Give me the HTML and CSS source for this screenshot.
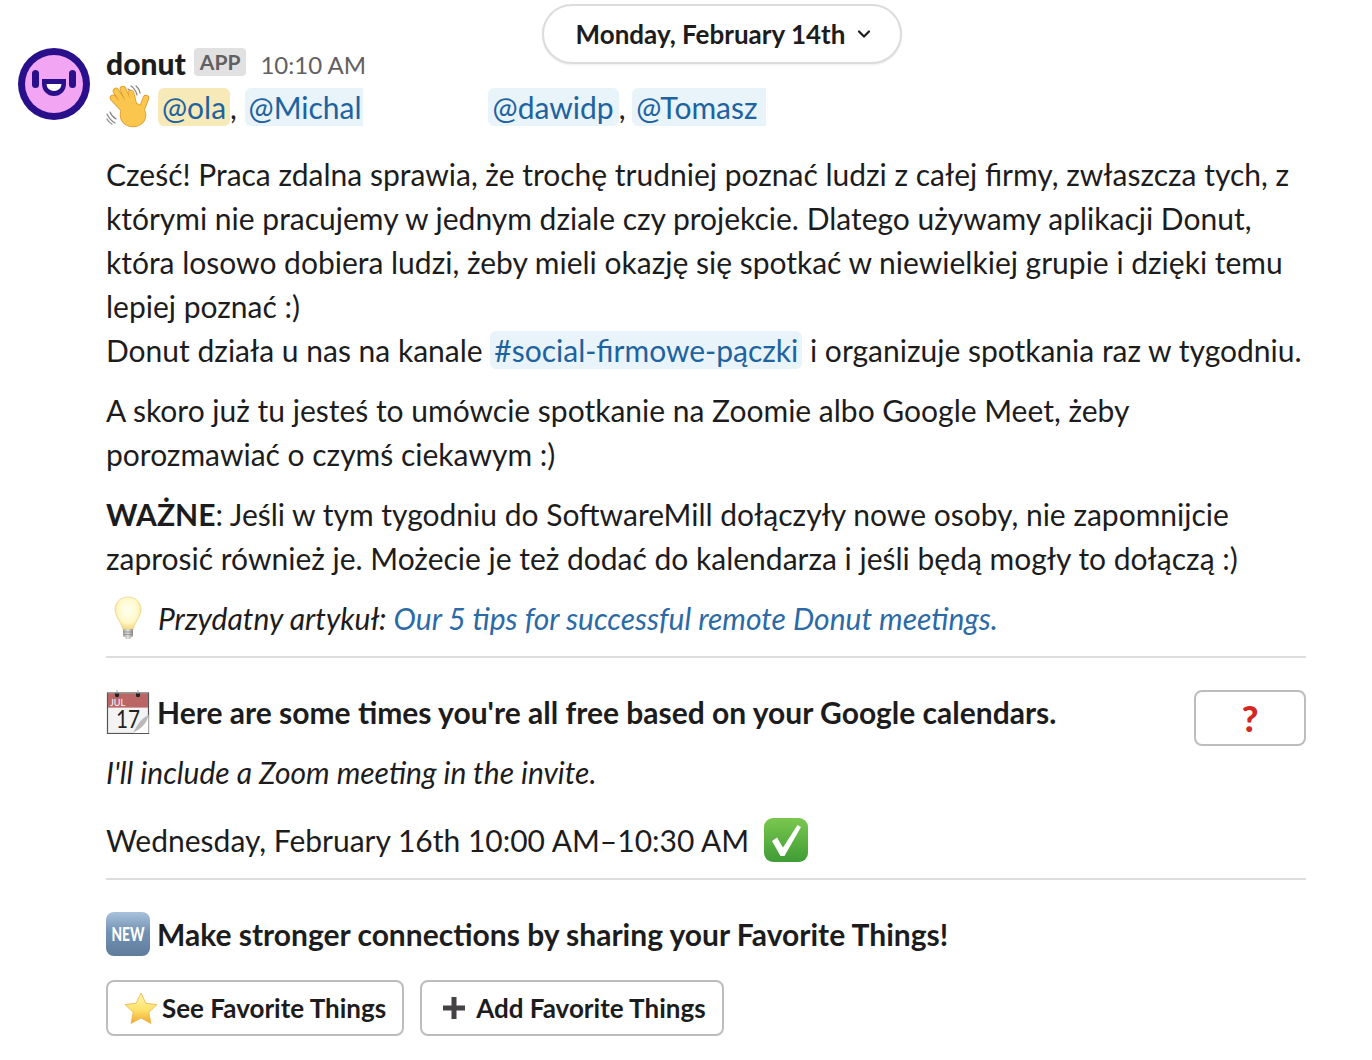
FILE: index.html
```html
<!DOCTYPE html>
<html lang="pl">
<head>
<meta charset="utf-8">
<title>donut</title>
<link rel="stylesheet" href="styles.css">
</head>
<body>
<button class="date-pill">Monday, February 14th
  <svg class="chev" viewBox="0 0 14 10" width="14" height="10"><path d="M2 2.500 7 7.500 12 2.500" fill="none" stroke="#1d1c1d" stroke-width="2.200" stroke-linecap="round" stroke-linejoin="round"/></svg>
</button>
<main class="message">
  <svg class="avatar" viewBox="0 0 72 72" width="72" height="72">
    <circle cx="36" cy="36" r="36" fill="#2a0f8a"/>
    <circle cx="36" cy="36" r="29" fill="#f1a5f3"/>
    <rect x="14" y="22" width="7" height="18" rx="3.500" fill="#2a0f8a"/>
    <rect x="51" y="22" width="7" height="18" rx="3.500" fill="#2a0f8a"/>
    <path d="M24 31H48V36A12 12 0 0 1 24 36Z" fill="#2a0f8a"/>
    <path d="M28.500 36H43.500A7.500 7 0 0 1 28.500 36Z" fill="#fff"/>
  </svg>
  <div class="body">
    <div class="head">
      <strong class="name">donut</strong>
      <span class="badge">APP</span>
      <span class="time">10:10 AM</span>
    </div>
    <p class="mentions">
      <svg class="emoji wave" viewBox="0 0 44 44" width="44" height="44">
        <path d="M25 1c3 2 5 5 6 9M22 4c2 1 4 4 5 7M30 1c2 2 4 4 4 7M1 29c2 4 4 7 8 9M4 27c1 3 3 5 6 7M1 34c1 2 3 4 5 5" fill="none" stroke="#858585" stroke-width="1.200" stroke-linecap="round"/>
        <g class="hand-shade">
          <path d="M21 28 7 13M22 25 10 6M25 23 17 4M29 24 25 8M33 31 40 13"/>
          <ellipse cx="27" cy="30" rx="10" ry="9"/>
        </g>
        <g class="hand-fill">
          <path d="M21 28 7 13M22 25 10 6M25 23 17 4M29 24 25 8M33 31 40 13"/>
          <ellipse cx="27" cy="30" rx="10" ry="9"/>
        </g>
      </svg><span class="mention self">@ola</span>, <span class="mention cut">@Michal</span><span class="redacted"></span><span class="mention wide">@dawidp</span>, <span class="mention tail">@Tomasz</span>
    </p>
    <div class="copy">
      <p>Cześć! Praca zdalna sprawia, że trochę trudniej poznać ludzi z całej firmy, zwłaszcza tych, z którymi nie pracujemy w jednym dziale czy projekcie. Dlatego używamy aplikacji Donut, która losowo dobiera ludzi, żeby mieli okazję się spotkać w niewielkiej grupie i dzięki temu lepiej poznać :)<br>Donut działa u nas na kanale <span class="channel">#social-firmowe-pączki</span> i organizuje spotkania raz w tygodniu.</p>
      <p>A skoro już tu jesteś to umówcie spotkanie na Zoomie albo Google Meet, żeby porozmawiać o czymś ciekawym :)</p>
      <p><strong>WAŻNE</strong>: Jeśli w tym tygodniu do SoftwareMill dołączyły nowe osoby, nie zapomnijcie zaprosić również je. Możecie je też dodać do kalendarza i jeśli będą mogły to dołączą :)</p>
      <p class="tip">
        <svg class="emoji" viewBox="0 0 44 44" width="44" height="44">
          <defs><radialGradient id="bulb" cx=".5" cy=".4" r=".6"><stop offset="0" stop-color="#fffff2"/><stop offset=".65" stop-color="#fff8c8"/><stop offset="1" stop-color="#f2d67f"/></radialGradient>
          <linearGradient id="base" x1="0" y1="0" x2="1" y2="0"><stop offset="0" stop-color="#a5a5a0"/><stop offset=".5" stop-color="#e2e2dc"/><stop offset="1" stop-color="#8a8a86"/></linearGradient></defs>
          <path d="M22 1C14.500 1 9 6.500 9 13.500c0 6.500 5.500 11.500 8 20h10c2.500-8.500 8-13.500 8-20C35 6.500 29.500 1 22 1Z" fill="url(#bulb)" stroke="#ecd48a" stroke-width=".8"/>
          <path d="M17 33h10v6.500c0 1-1 1.500-2 1.500l-1 2h-4l-1-2c-1 0-2-.5-2-1.500Z" fill="url(#base)"/>
          <path d="M17 36h10M17 38.500h10" stroke="#85857f" stroke-width=".7"/>
        </svg><em>Przydatny artykuł: <a href="#">Our 5 tips for successful remote Donut meetings.</a></em>
      </p>
    </div>
    <hr>
    <section class="times">
      <div class="times-text">
        <h2 class="title">
          <svg class="emoji" viewBox="0 0 44 44" width="44" height="44">
            <rect x="1.500" y="3" width="41" height="40.500" fill="#f3f3f3" stroke="#555" stroke-width="1.200"/>
            <rect x="2" y="3.600" width="40" height="14" fill="#bb6666"/>
            <circle cx="11" cy="5" r="2.200" fill="#222"/><circle cx="32" cy="5" r="2.200" fill="#222"/>
            <path d="M11 0v4M32 0v4" stroke="#9aa" stroke-width="1"/>
            <text class="cal-month" x="4" y="15.500">JUL</text>
            <text class="cal-day" x="10" y="38" textLength="24" lengthAdjust="spacingAndGlyphs">17</text>
            <path d="M42.500 25 27 43h15.500Z" fill="#fff"/>
            <path d="M42.500 25C41 33 36 38 27 43 32 35 33 30 42.500 25Z" fill="#b9b9b9"/>
          </svg>Here are some times you're all free based on your Google calendars.
        </h2>
        <p class="note"><em>I'll include a Zoom meeting in the invite.</em></p>
      </div>
      <button class="btn help">?</button>
    </section>
    <p class="slot">Wednesday, February 16th 10:00 AM–10:30 AM
      <svg class="check" viewBox="0 0 44 44" width="44" height="44">
        <defs><linearGradient id="green" x1="0" y1="0" x2="0" y2="1"><stop offset="0" stop-color="#7ac74f"/><stop offset="1" stop-color="#3f9c35"/></linearGradient></defs>
        <rect width="44" height="44" rx="9" fill="url(#green)"/>
        <path d="M8 23l5-3.500 6 10L33.500 7 37 9 20.500 38h-4Z" fill="#fff"/>
      </svg>
    </p>
    <hr class="second">
    <h2 class="title new-title">
      <svg class="emoji" viewBox="0 0 44 44" width="44" height="44">
        <defs><linearGradient id="blue" x1="0" y1="0" x2="0" y2="1"><stop offset="0" stop-color="#a9c2dc"/><stop offset=".45" stop-color="#7392b3"/><stop offset="1" stop-color="#5f7c9c"/></linearGradient></defs>
        <rect width="44" height="44" rx="8" fill="url(#blue)"/>
        <text class="new-label" x="5.500" y="28.500" textLength="33" lengthAdjust="spacingAndGlyphs">NEW</text>
      </svg>Make stronger connections by sharing your Favorite Things!
    </h2>
    <div class="actions">
      <button class="btn">
        <svg class="btn-icon" viewBox="0 0 34 32" width="34" height="32">
          <defs><linearGradient id="star" x1="0" y1="0" x2="0" y2="1"><stop offset="0" stop-color="#fff6b0"/><stop offset=".55" stop-color="#fde26a"/><stop offset="1" stop-color="#efa72d"/></linearGradient></defs>
          <path d="M17 1l4.800 10.200L33 12.600l-8.200 7.700L27 31.500l-10-5.500-10 5.500 2.200-11.200L1 12.600l11.200-1.400Z" fill="url(#star)" stroke="#eeb244" stroke-width=".8" stroke-linejoin="round"/>
        </svg>See Favorite Things
      </button>
      <button class="btn">
        <svg class="btn-icon plus" viewBox="0 0 26 26" width="26" height="26"><path d="M13 2v22M2 13h22" stroke="#454245" stroke-width="5"/></svg>Add Favorite Things
      </button>
    </div>
  </div>
</main>
</body>
</html>
```

FILE: styles.css
```css
* { box-sizing: border-box; }
html, body { margin: 0; padding: 0; }
body {
  position: relative;
  height: 1060px;
  overflow: hidden;
  background: #fff;
  color: #1d1c1d;
  font-family: Lato, "Liberation Sans", sans-serif;
  font-size: 30px;
  line-height: 44px;
}
p, h2 { margin: 0; }
.date-pill {
  position: absolute;
  left: 542px;
  top: 4px;
  width: 360px;
  height: 60px;
  display: flex;
  align-items: center;
  justify-content: center;
  gap: 12px;
  padding: 0 0 0 3px;
  background: #fff;
  border: 2px solid #dcdcdc;
  border-radius: 30px;
  box-shadow: 0 1px 2px rgba(0,0,0,.08);
  color: #1d1c1d;
  font: 700 26px Lato, sans-serif;
}
.message {
  display: flex;
  gap: 16px;
  padding: 48px 66px 0 18px;
}
.avatar { flex: none; }
.body { width: 1200px; flex: none; }
.head {
  display: flex;
  align-items: center;
  height: 38px;
  margin-top: -4px;
}
.name { font-size: 30px; font-weight: 900; }
.badge {
  margin-left: 8px;
  padding: 0 6px;
  height: 28px;
  margin-top: -2px;
  line-height: 28px;
  border-radius: 4px;
  background: #e1e1e1;
  color: #616061;
  font-size: 21px;
  font-weight: 700;
}
.time { margin-left: 14px; margin-top: 4px; color: #616061; font-size: 24px; }
.mentions { display: flex; align-items: center; height: 44px; white-space: pre; margin-top: 3px; }
.emoji { flex: none; vertical-align: middle; margin-right: 8px; }
.hand-shade { fill: #dc962a; stroke: #dc962a; stroke-width: 6.500; stroke-linecap: round; }
.hand-fill { fill: #fac64e; stroke: #fac64e; stroke-width: 5; stroke-linecap: round; }
.mention {
  padding: 0 4px;
  height: 38px;
  line-height: 38px;
  border-radius: 6px;
  background: #e8f3fa;
  color: #1e639f;
}
.self { background: #f8e9b9; }
.cut { padding-right: 1px; border-radius: 6px 0 0 6px; }
.redacted { width: 125px; }
.wide { padding: 0 5px; }
.tail { margin-left: -1px; padding: 0 8px 0 4px; border-radius: 6px 0 0 6px; }
.copy { margin-top: 23px; }
.copy p { margin-bottom: 16px; }
.channel {
  padding: 1px 4px;
  border-radius: 6px;
  background: #e8f3fa;
  color: #1e639f;
}
.tip { display: flex; align-items: center; margin-top: 15px; }
.tip a { color: #2b6aa6; text-decoration: none; }
.copy .tip { margin-bottom: 0; }
hr {
  height: 2px;
  margin: 16px 0 0;
  border: 0;
  background: #dddddd;
}
.times { display: flex; justify-content: space-between; padding-top: 32px; }
.title { display: flex; align-items: center; font-size: 30px; font-weight: 700; line-height: 44px; }
.title .emoji { margin-right: 7px; }
.note { margin-top: 16px; }
.help {
  width: 112px;
  height: 56px;
  padding: 0;
  color: #d3281f;
  font-size: 36px;
  font-weight: 900;
  justify-content: center;
}
.btn {
  display: flex;
  align-items: center;
  flex: none;
  background: #fff;
  border: 2px solid #bdbdbd;
  border-radius: 8px;
  font-family: Lato, sans-serif;
}
.slot { display: flex; align-items: center; gap: 15px; margin-top: 24px; white-space: nowrap; }
.slot .check { flex: none; }
.second { margin-top: 16px; }
.new-title { margin-top: 32px; }
.actions { display: flex; gap: 16px; margin-top: 24px; }
.actions .btn {
  height: 56px;
  padding: 0 16px;
  color: #1d1c1d;
  font-size: 26px;
  font-weight: 700;
}
.btn-icon { margin-right: 4px; }
.plus { margin-right: 9px; margin-left: 3px; }
.cal-month { font: 400 9px Lato, sans-serif; fill: #fff; }
.cal-day { font: 400 25px Lato, sans-serif; fill: #222; }
.new-label { font: 900 18px Lato, sans-serif; fill: #fff; }
```
